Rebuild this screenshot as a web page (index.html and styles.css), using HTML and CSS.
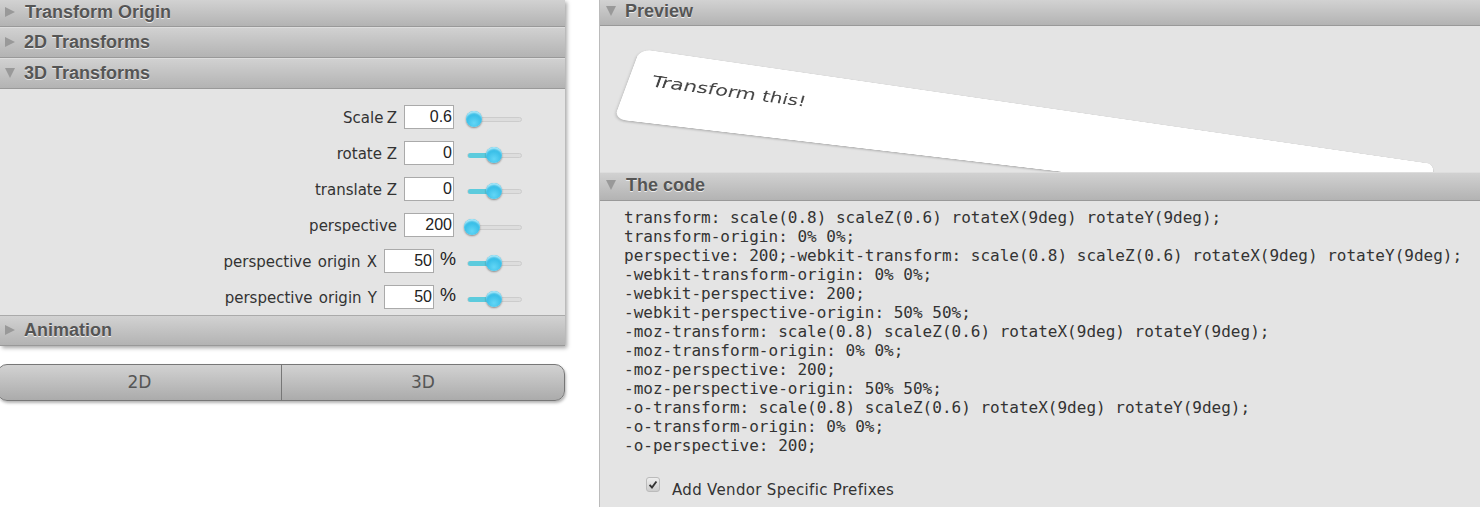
FILE: index.html
```html
<!DOCTYPE html>
<html lang="en">
<head>
<meta charset="utf-8">
<title>CSS3 Transform Generator</title>
<link rel="stylesheet" href="styles.css">
</head>
<body>
<div class="page">
  <aside class="side">
    <div class="accordion">
      <h3 class="bar bar-first"><svg class="tri" viewBox="0 0 10 10"><path d="M0 0L10 5L0 10Z"/></svg>Transform Origin</h3>
      <h3 class="bar"><svg class="tri" viewBox="0 0 10 10"><path d="M0 0L10 5L0 10Z"/></svg>2D Transforms</h3>
      <h3 class="bar"><svg class="tri" viewBox="0 0 10 10"><path d="M0 0L10 0L5 10Z"/></svg>3D Transforms</h3>
      <div class="controls">
        <div class="row"><label class="lbl lbl-tight">Scale Z</label><input class="num" value="0.6"><div class="slider"><span class="fill" style="width:7px"></span><span class="knob" style="left:7px"></span></div></div>
        <div class="row"><label class="lbl">rotate Z</label><input class="num" value="0"><div class="slider"><span class="fill" style="width:27px"></span><span class="knob" style="left:27px"></span></div></div>
        <div class="row"><label class="lbl">translate Z</label><input class="num" value="0"><div class="slider"><span class="fill" style="width:27px"></span><span class="knob" style="left:27px"></span></div></div>
        <div class="row"><label class="lbl">perspective</label><input class="num" value="200"><div class="slider"><span class="fill" style="width:5px"></span><span class="knob" style="left:5px"></span></div></div>
        <div class="row"><label class="lbl lbl-wide">perspective origin X</label><input class="num" value="50"><span class="pct">%</span><div class="slider"><span class="fill" style="width:27px"></span><span class="knob" style="left:27px"></span></div></div>
        <div class="row"><label class="lbl lbl-wide">perspective origin Y</label><input class="num" value="50"><span class="pct">%</span><div class="slider"><span class="fill" style="width:27px"></span><span class="knob" style="left:27px"></span></div></div>
      </div>
      <h3 class="bar bar-last"><svg class="tri" viewBox="0 0 10 10"><path d="M0 0L10 5L0 10Z"/></svg>Animation</h3>
    </div>
    <div class="switch">
      <button class="seg seg-a" type="button">2D</button>
      <button class="seg" type="button">3D</button>
    </div>
  </aside>
  <main class="main">
    <h3 class="bar bar-preview"><svg class="tri" viewBox="0 0 10 10"><path d="M0 0L10 0L5 10Z"/></svg>Preview</h3>
    <section class="stage">
      <div class="card">Transform this!</div>
    </section>
    <h3 class="bar bar-code"><svg class="tri" viewBox="0 0 10 10"><path d="M0 0L10 0L5 10Z"/></svg>The code</h3>
    <section class="code">
<pre class="css">transform: scale(0.8) scaleZ(0.6) rotateX(9deg) rotateY(9deg);
transform-origin: 0% 0%;
perspective: 200;-webkit-transform: scale(0.8) scaleZ(0.6) rotateX(9deg) rotateY(9deg);
-webkit-transform-origin: 0% 0%;
-webkit-perspective: 200;
-webkit-perspective-origin: 50% 50%;
-moz-transform: scale(0.8) scaleZ(0.6) rotateX(9deg) rotateY(9deg);
-moz-transform-origin: 0% 0%;
-moz-perspective: 200;
-moz-perspective-origin: 50% 50%;
-o-transform: scale(0.8) scaleZ(0.6) rotateX(9deg) rotateY(9deg);
-o-transform-origin: 0% 0%;
-o-perspective: 200;</pre>
      <label class="prefix"><span class="check"><svg viewBox="0 0 14 14"><path d="M3 7.5L5.8 10.5L11 3.5" /></svg></span><span class="prefix-text">Add Vendor Specific Prefixes</span></label>
    </section>
  </main>
</div>
</body>
</html>
```
FILE: styles.css
```css
* { box-sizing: border-box; }
html, body { margin: 0; height: 507px; overflow: hidden; background: #fff; }
body { font-family: "DejaVu Sans", sans-serif; color: #333; }
.page { display: flex; height: 507px; }
.side { width: 565px; flex: none; margin-right: 34px; }
.accordion { box-shadow: 2px 2px 4px rgba(0,0,0,.35); }
.bar {
  display: flex; align-items: center; margin: 0; height: 31px; padding-left: 5px;
  font: bold 18px/1 "Liberation Sans", Arial, sans-serif; color: #555;
  text-shadow: 0 1px 0 #eee;
  background: linear-gradient(#d2d2d2, #b3b3b3);
  border-bottom: 1px solid #999;
  box-shadow: inset 0 1px 0 #ddd;
}
.bar-first { height: 27px; padding-bottom: 2px; box-shadow: none; }
.bar-first .tri { margin-right: 10px; }
.bar-last { border-top: 1px solid #aaa; box-shadow: none; padding-bottom: 1px; }
.tri { width: 10px; height: 10px; margin-right: 9px; fill: #999; flex: none; }
.controls { height: 226px; background: #e4e4e4; padding-top: 10px; }
.row { display: flex; align-items: center; justify-content: flex-end; height: 36px; padding-right: 43px; }
.lbl { font-size: 15px; margin: 2px 7px 0 0; color: #333; }
.lbl-tight { word-spacing: -1.5px; }
.lbl-wide { word-spacing: 1.5px; }
.num { width: 50px; height: 24px; border: 1px solid #aaa; background: #fff; padding: 0 1px; text-align: right; font: 16px "Liberation Sans", Arial, sans-serif; color: #222; }
.pct { width: 33px; padding-left: 6px; font: 18px "Liberation Sans", Arial, sans-serif; color: #222; margin-top: -4px; }
.slider { position: relative; width: 55px; height: 5px; margin-left: 13px; border-radius: 3px; background: #ddd; border: 1px solid #ccc; margin-top: 4px; }
.pct + .slider { margin-left: 0; }
.fill { position: absolute; left: 0; top: -1px; height: 5px; background: #5ccbdd; border-radius: 3px 0 0 3px; }
.knob { position: absolute; top: -7px; width: 16px; height: 16px; margin-left: -9px; border-radius: 50%; background: radial-gradient(circle at 50% 75%, #62d6f6, #2ab6e2 75%); box-shadow: inset 0 3px 2px -1px #b0eafa, 0 1px 2px rgba(0,0,0,.4); }
.switch { display: flex; height: 37px; margin: 18px 0 0 -3px; border: 1px solid #777; border-radius: 10px; box-shadow: 1px 2px 3px rgba(0,0,0,.3); background: linear-gradient(#d2d2d2, #ababab); overflow: hidden; }
.seg { flex: 1; border: 0; background: none; font: 17px "DejaVu Sans", sans-serif; color: #555; padding: 0 0 2px; }
.seg-a { flex: none; width: 284px; border-right: 1px solid #777; }
.main { flex: 1; min-width: 0; border-left: 1px solid #bbb; background: #e4e4e4; }
.bar-preview { height: 26px; padding-bottom: 3px; box-shadow: none; }
.bar-code { height: 29px; padding-bottom: 2px; }
.bar-code .tri { margin-right: 10px; }
.main .bar { padding-left: 6px; }
.stage { height: 146px; overflow: hidden; padding: 23px 0 0 40px; }
.card { width: 800px; height: 68px; background: #fff; border-radius: 8px; padding: 19px 16px; font-size: 15.4px; line-height: 20px; color: #444; transform-origin: 0 0; transform: matrix3d(1.41178, .20509, 0, .0005303, -.37022, .99674, 0, -.00046685, 0, 0, 1, 0, 0, 0, 0, 1); box-shadow: 0 1px 2px rgba(0,0,0,.25); }
.code { padding: 7px 0 0 24px; }
.css { margin: 0; font: 16px/19px "DejaVu Sans Mono", monospace; color: #333; }
.prefix { display: flex; align-items: flex-start; margin: 22px 0 0 22px; font-size: 15px; color: #333; }
.prefix-text { margin-top: 4px; line-height: 18px; letter-spacing: .32px; }
.check { width: 14px; height: 15px; margin-right: 12px; border: 1px solid #bbb; border-radius: 3px; background: linear-gradient(#eee, #ccc); }
.check svg { display: block; fill: none; stroke: #333; stroke-width: 2.2; width: 12px; height: 13px; }
```
